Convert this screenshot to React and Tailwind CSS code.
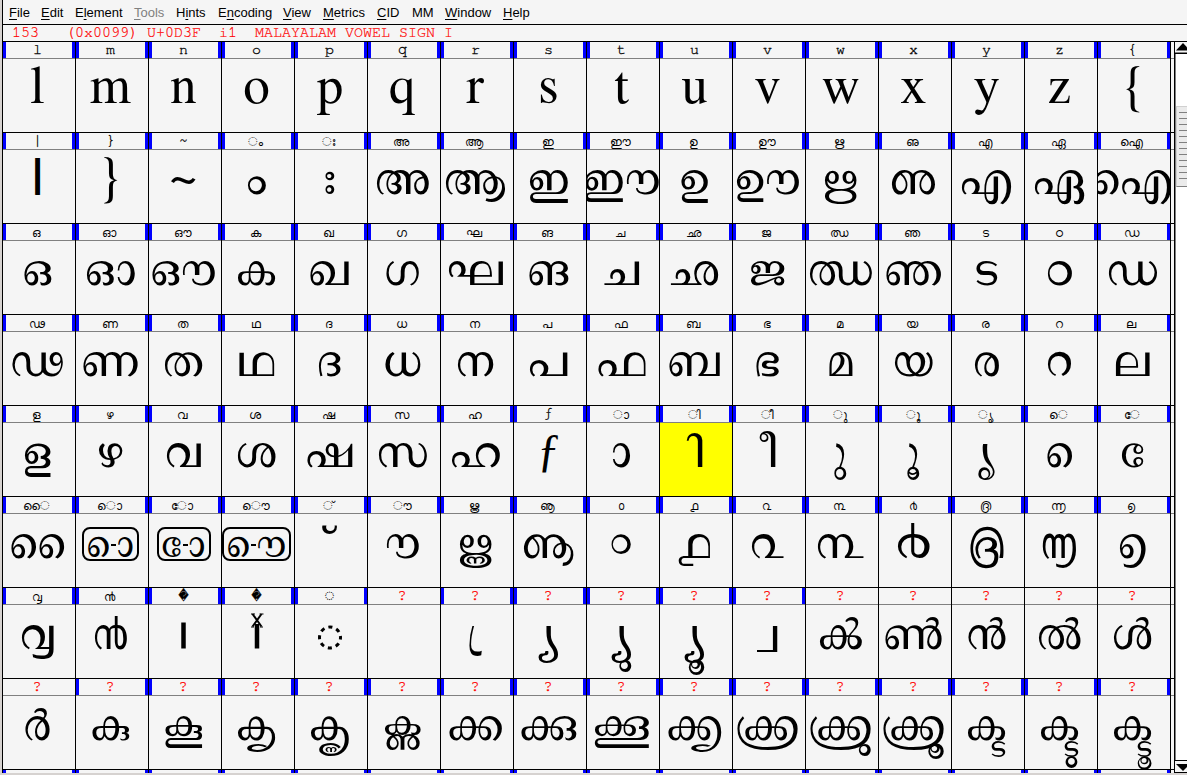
const N = "\u00a0";

const menu = [
  ["", "F", "ile", "w-[32px]"],
  ["", "E", "dit", "w-[34px]"],
  ["E", "l", "ement", "w-[59px]"],
  ["", "T", "ools", "w-[42px] text-[#808080]"],
  ["H", "i", "nts", "w-[42px]"],
  ["E", "n", "coding", "w-[65px]"],
  ["", "V", "iew", "w-[40px]"],
  ["", "M", "etrics", "w-[54px]"],
  ["", "C", "ID", "w-[35px]"],
  ["MM", "", "", "w-[33px]"],
  ["", "W", "indow", "w-[58px]"],
  ["", "H", "elp", "w-[40px]"],
];

const same = (s) => s.split(" ").map((c) => [c, c]);
const un = (list) => list.map((g) => ["?", g]);

// Each cell: [label, glyph]
const rows = [
  same("l m n o p q r s t u v w x y z {"),
  [["|", { kind: "bar" }], ...same("} ~"), ["ം", N + "ം"], ["ഃ", N + "ഃ"], ...same("അ ആ ഇ ഈ ഉ ഊ ഋ ഌ എ ഏ ഐ")],
  same("ഒ ഓ ഔ ക ഖ ഗ ഘ ങ ച ഛ ജ ഝ ഞ ട ഠ ഡ"),
  same("ഢ ണ ത ഥ ദ ധ ന പ ഫ ബ ഭ മ യ ര റ ല"),
  [...same("ള ഴ വ ശ ഷ സ ഹ"), ["ƒ", { kind: "florin" }], ..."ാ ി ീ ു ൂ ൃ െ േ".split(" ").map((c) => [c, N + c])],
  [
    ["ൈ", N + "ൈ"],
    ["ൊ", { kind: "box", parts: ["െ", "ാ"] }],
    ["ോ", { kind: "box", parts: ["േ", "ാ"] }],
    ["ൌ", { kind: "box", parts: ["െ", "ൗ"] }],
    ["്", N + "്"],
    ["ൗ", N + "ൗ"],
    ...same("ൠ ൡ ൦ ൧ ൨ ൩ ൪ ൫ ൬ ൭"),
  ],
  [
    ...same("൮ ൯"),
    ["�", { kind: "stem" }],
    ["�", { kind: "anchor" }],
    ["◌", { kind: "dotted" }],
    ...un(["", N + "്ര", N + "്യ", N + "്യു", N + "്യൂ", N + "്വ", "ൿ", "ൺ", "ൻ", "ൽ", "ൾ"]),
  ],
  un(["ർ", "കു", "കൂ", "കൃ", "കൄ", "കൢ", "ക്ക", "ക്കു", "ക്കൂ", "ക്കൃ", "ക്ക്ര", "ക്ക്രു", "ക്ക്രൂ", "ക്ട", "ക്ടു", "ക്ടൂ"]),
];

const unmarked = (r, c) => (r === 6 && (c === 5 || c > 10)) || (r === 7 && c === 0);

const ctx = document.createElement("canvas").getContext("2d");

// Text whose box is as wide as its ink, so that it centres on what is drawn.
function Ink({ text, size, family = "FreeSerif", className = "" }) {
  ctx.font = `${size}px ${family}`;
  const m = ctx.measureText(text);
  return (
    <span className={`inline-block shrink-0 whitespace-pre ${className}`} style={{ width: m.actualBoundingBoxLeft + m.actualBoundingBoxRight }}>
      <span className="inline-block" style={{ marginLeft: m.actualBoundingBoxLeft, marginRight: -200 }}>{text}</span>
    </span>
  );
}

function Glyph({ g }) {
  if (typeof g === "string") return g ? <Ink text={g} size={53} /> : null;
  if (g.kind === "bar") return <span className="font-['Liberation_Sans'] text-[38px] font-bold leading-[46px]">|</span>;
  if (g.kind === "florin") return <span className="inline-block h-[66px] pl-px font-['Liberation_Serif'] text-[47px] leading-[54px]">ƒ</span>;
  if (g.kind === "box")
    return (
      <span className="mt-[13px] flex h-[34px] shrink-0 items-start gap-[2px] rounded-[8px] border-2 border-black px-[4px] text-[44px] leading-[30px]">
        <Ink text={N + g.parts[0]} size={44} />
        <span className="mt-[15px] h-[2px] w-[5px] overflow-hidden bg-black text-[2px] leading-[2px]">-</span>
        <Ink text={N + g.parts[1]} size={44} />
      </span>
    );
  if (g.kind === "stem")
    return <svg width="5" height="73"><path d="M2.5 17.500v26" stroke="#000" strokeWidth="4.500" /></svg>;
  if (g.kind === "anchor")
    return (
      <svg width="14" height="73" fill="none" stroke="#000">
        <path d="M7 19v24.500" strokeWidth="4.500" />
        <path d="M2.500 9 11.500 21.500M11.500 9 2.500 21.500" strokeWidth="2" />
        <path d="M1 9h4M9.500 9h4M1 22h3M10 22h3" strokeWidth="1" />
      </svg>
    );
  return (
    <svg width="26" height="73" fill="none" stroke="#000">
      <circle cx="13" cy="32.500" r="10.500" strokeWidth="3" strokeDasharray="4.100 4.147" strokeDashoffset="2" />
    </svg>
  );
}

function Label({ text }) {
  if (text === "?") return <span className="font-['FreeMono'] text-[15px] text-[#ff0000] [-webkit-text-stroke:0.25px_#ff0000]">?</span>;
  if (text >= "\u0d00" && text <= "\u0d7f") return <Ink text={text} size={12} family="FreeMono" className="font-['FreeMono'] text-[12px] leading-[18px]" />;
  return <span className="pl-px font-['FreeMono'] text-[15px] [-webkit-text-stroke:0.3px_#000]">{text}</span>;
}

function Cell({ label, glyph, marked, selected }) {
  const mark = marked ? "w-[3px] bg-[#0000ff]" : "w-[3px]";
  return (
    <div className="w-[73px] border-r border-black">
      <div className="flex h-4 justify-between leading-4">
        <div className={mark} />
        <div className="flex w-0 justify-center whitespace-nowrap pr-[4px]"><Label text={label} /></div>
        <div className={mark} />
      </div>
      <div className="h-px bg-[#808080]" />
      <div className={selected ? "h-[73px] bg-[#ffff00]" : "h-[73px]"}>
        <div className="flex h-[73px] justify-center overflow-hidden whitespace-nowrap pr-[3px] font-['FreeSerif'] text-[53px] leading-[58px]">
          <Glyph g={glyph} />
        </div>
      </div>
    </div>
  );
}

function Scrollbar() {
  return (
    <div className="flex w-[13px] flex-col border-l border-t border-black bg-white">
      <div className="flex h-[12px] flex-col justify-between border-b border-black bg-[#f5f5f5]">
        <svg width="12" height="9"><path d="M1 8.500 8 1l7 7.500z" /></svg>
        <div className="h-px bg-[#808080]" />
      </div>
      <div className="flex-1 border-l border-[#808080] pt-[52px]">
        <div className="flex h-[81px] flex-col gap-[5px] border-b border-l border-t border-b-[#808080] border-l-[#d0d0d0] border-t-[#d0d0d0] bg-[#ebebeb] pl-[2px] pt-[5px]">
          {Array.from({ length: 12 }, (_, i) => <div key={i} className="h-px shrink-0 bg-[#808080]" />)}
        </div>
      </div>
      <div className="h-[13px] border-y border-black bg-[#f5f5f5]">
        <svg width="12" height="11"><path d="M1 3h14L8 10z" /></svg>
      </div>
    </div>
  );
}

export default function App() {
  return (
    <div className="flex h-[775px] w-[1187px] flex-col overflow-hidden bg-[#d6d2d0] text-black">
      <div className="flex h-[773px] pl-[2px]">
        <div className="flex min-w-0 flex-1 flex-col border-l border-black bg-[#f5f5f5]">
          <div className="flex h-6 shrink-0 pl-[6px] pt-[4px] font-['Liberation_Sans'] text-[13px] leading-[17px]">
            {menu.map(([a, u, b, w], i) => (
              <span key={i} className={w}>{a}<span className="underline underline-offset-2">{u}</span>{b}</span>
            ))}
          </div>
          <div className="h-[17px] shrink-0 whitespace-pre border-t border-black pl-[9px] font-['FreeMono'] text-[15px] leading-4 text-[#ff0000] [-webkit-text-stroke:0.2px_#ff0000]">
            {"153   (0x0099) U+0D3F  i1  MALAYALAM VOWEL SIGN I"}
          </div>
          <div className="flex min-h-0 flex-1">
            <div className="min-w-0 flex-1">
              {rows.map((r, i) => (
                <div key={i} className="flex h-[91px] border-t border-black">
                  {r.map(([l, g], j) => (
                    <Cell key={j} label={l} glyph={g} marked={!unmarked(i, j)} selected={i === 4 && j === 9} />
                  ))}
                  <div className="mt-4 h-px flex-1 bg-[#808080]" />
                </div>
              ))}
              <div className="flex h-[4px] border-t border-black">
                {rows[0].map((_, j) => (
                  <div key={j} className="flex w-[73px] justify-between border-r border-black">
                    <div className="w-[3px] bg-[#0000ff]" />
                    <div className="w-[3px] bg-[#0000ff]" />
                  </div>
                ))}
              </div>
            </div>
            <Scrollbar />
          </div>
        </div>
      </div>
    </div>
  );
}
